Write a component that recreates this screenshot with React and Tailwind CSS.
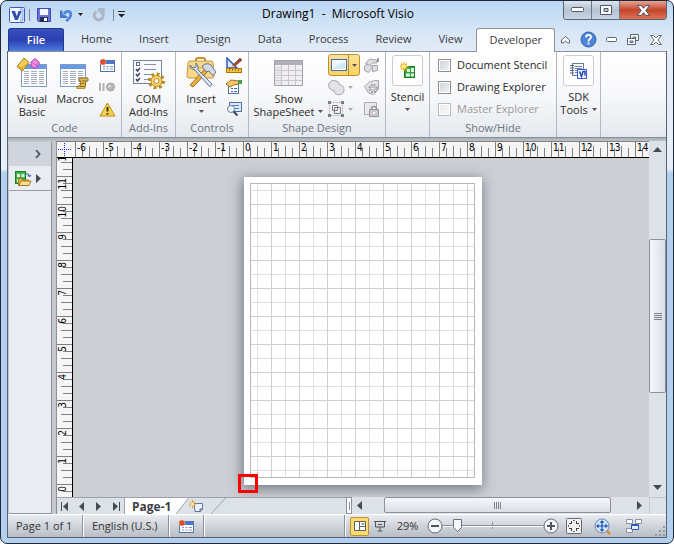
import React, { useState } from 'react'

const TABS = ['Home', 'Insert', 'Design', 'Data', 'Process', 'Review', 'View', 'Developer']
const H_UNITS = [-6, -5, -4, -3, -2, -1, 0, 1, 2, 3, 4, 5, 6, 7, 8, 9, 10, 11, 12, 13, 14]
const V_UNITS = [12, 11, 10, 9, 8, 7, 6, 5, 4, 3, 2, 1, 0]

/* ---------- icons ---------- */

function VisioIcon() {
  return (
    <svg width="16" height="16" viewBox="0 0 16 16">
      <rect x=".5" y=".5" width="15" height="15" rx="1" fill="#f4f8ff" stroke="#3d5dbb" />
      <path d="M11 2h3v12h-3" fill="#c7d7f6" stroke="#7f9be0" strokeWidth=".8" />
      <path d="M2.500 4h3.500l1.800 5.200L9.500 4H12.500l-3.700 9H6z" fill="#2c4cae" />
    </svg>
  )
}

function SaveIcon() {
  return (
    <svg width="14" height="14" viewBox="0 0 14 14">
      <path d="M.5.500h13v13h-12l-1-1z" fill="#6a74d4" stroke="#4149a8" />
      <rect x="3" y="1" width="8" height="6" fill="#f3f6fd" />
      <rect x="3" y="9" width="8" height="5" fill="#272c5c" />
      <rect x="7" y="10" width="3" height="3" fill="#fff" />
    </svg>
  )
}

function UndoIcon() {
  return (
    <svg width="13" height="14" viewBox="0 0 13 14">
      <path d="M4 6C6 2.500 11 2.500 10.800 6.500 10.500 10 8.500 11.500 6 13" fill="none" stroke="#4f86dc" strokeWidth="2.800" />
      <path d="M0 2.500h2.500V6l5 2.500v1.500H0z" fill="#4278d2" />
    </svg>
  )
}

function RedoIcon() {
  return (
    <svg width="13" height="14" viewBox="0 0 13 14">
      <path d="M4.500 3.500a4.500 4.500 0 1 0 5.500.8" fill="none" stroke="#adb6c2" strokeWidth="3" />
      <path d="M6 0h6.500v6.500H9.500L6 3z" fill="#adb6c2" />
    </svg>
  )
}

function Caret({ color = '#555' }) {
  return (
    <svg width="5" height="3" viewBox="0 0 5 3"><path d="M0 0h5L2.500 3z" fill={color} /></svg>
  )
}

function SheetBase({ x = 0, y = 0 }) {
  return (
    <g transform={`translate(${x} ${y})`}>
      <rect x=".5" y=".5" width="25" height="22" fill="#fff" stroke="#7f9cc9" />
      <rect x="1" y="1" width="24" height="4" fill="#6b9ae4" />
      <path d="M3 7.500h5M3 9.500h5M3 11.500h5M3 13.500h5M3 15.500h5M3 17.500h5M3 19.500h5M10 7.500h6M10 9.500h6M10 11.500h6M10 13.500h6M10 15.500h6M10 17.500h6M10 19.500h6M18 7.500h5M18 9.500h5M18 11.500h5M18 13.500h5M18 15.500h5M18 17.500h5M18 19.500h5" stroke="#a3adc0" />
    </g>
  )
}

function VisualBasicIcon() {
  return (
    <svg width="32" height="32" viewBox="0 0 32 32">
      <SheetBase x={5} y={7} />
      <path d="M1 9.500L8 1l5 4.500L6.500 14z" fill="#f2cd57" stroke="#a67a14" />
      <path d="M1 9.500L6 11l7-5.500M6 11l.5 3" fill="none" stroke="#c8961d" strokeWidth=".8" />
      <path d="M15 5l4-3.500 4.500 4L20 12l-5-3z" fill="#f08ae6" stroke="#b642ad" />
      <path d="M15 5l5 3 3-2.500M20 8v4" fill="none" stroke="#c552bc" strokeWidth=".7" />
    </svg>
  )
}

function MacrosIcon() {
  return (
    <svg width="32" height="32" viewBox="0 0 32 32">
      <SheetBase x={1} y={7} />
      <path d="M20 21h9v3h-2l-1 6c0 1.500-1 2-2 2h-5c-1.500 0-1.500-3 0-3h2l1-5h-2z" fill="#e3ba55" stroke="#8f6a18" />
      <path d="M23 24h4M22.500 26.500h3M21 29.500h4" stroke="#8f6a18" />
    </svg>
  )
}

function RecordMacroIcon() {
  return (
    <svg width="16" height="15" viewBox="0 0 16 15">
      <rect x="1.500" y="2.500" width="14" height="11" fill="#fff" stroke="#5472a8" />
      <rect x="2" y="3" width="13" height="3" fill="#4976cf" />
      <path d="M4 8.500h2M4 11h2M7.500 8.500h2M7.500 11h2M11 8.500h3M11 11h3" stroke="#7b93c4" />
      <circle cx="4" cy="4" r="3" fill="#dc4a2b" stroke="#f5b19c" strokeWidth=".6" />
    </svg>
  )
}

function PauseIcon() {
  return (
    <svg width="16" height="10" viewBox="0 0 16 10">
      <path d="M1 1v8M4.500 1v8" stroke="#b4b4b4" strokeWidth="2" />
      <circle cx="11.500" cy="5" r="4" fill="#b7b7b7" stroke="#a2a2a2" />
      <circle cx="10.500" cy="4" r="1.500" fill="#dadada" />
    </svg>
  )
}

function WarningIcon() {
  return (
    <svg width="17" height="15" viewBox="0 0 17 15">
      <path d="M8.500 1L16 14H1z" fill="#fbd34b" stroke="#b98d1d" strokeLinejoin="round" />
      <path d="M8.500 5v4.500M8.500 11v1.500" stroke="#222" strokeWidth="1.800" />
    </svg>
  )
}

function ComIcon() {
  return (
    <svg width="33" height="32" viewBox="0 0 33 32">
      <rect x="1.500" y="3.500" width="28" height="23" fill="#fafbfe" stroke="#76829a" />
      <path d="M12 7.500h12M12 12.500h12M12 17.500h8M12 22.500h5" stroke="#8490a6" />
      <rect x="4.500" y="5.500" width="3" height="3" fill="#fff" stroke="#5a6b8b" />
      <path d="M4 12l1.500 2L8 11M4 17l1.500 2L8 16M4 22l1.500 2L8 21" fill="none" stroke="#3a4660" strokeWidth="1.500" />
      <circle cx="24.500" cy="24" r="7" fill="none" stroke="#b98721" strokeWidth="3" strokeDasharray="2.750 2.750" />
      <circle cx="24.500" cy="24" r="5.500" fill="#f8d568" stroke="#b98721" />
      <circle cx="24.500" cy="24" r="2.500" fill="#fff" stroke="#b98721" />
    </svg>
  )
}

function ToolboxIcon() {
  return (
    <svg width="32" height="32" viewBox="0 0 32 32">
      <path d="M11 5V2.500Q11 1 13 1h5q2 0 2 1.500V5" fill="none" stroke="#c58f2b" strokeWidth="2" />
      <path d="M3 6q0-2 2-2h21q2 0 2 2l1 13q0 2-2 2H4q-2 0-2-2z" fill="#f9d78c" stroke="#c9973b" />
      <path d="M3 11h26" stroke="#dcae55" />
      <path d="M5 28L21 11l3 2L8 30z" fill="#f0ae3e" stroke="#9a6a1c" />
      <path d="M17 9q5-4 9-1l5 7-3 4-4-5-3 1z" fill="#d3d9e4" stroke="#6b7688" />
      <path d="M5 8q0 4 5 5l13 15q3 3 4-1L13 13q1-4-2-7v4l-3 1z" fill="#dbe6f5" stroke="#5c7394" />
    </svg>
  )
}

function DesignModeIcon() {
  return (
    <svg width="17" height="16" viewBox="0 0 17 16">
      <path d="M1 1v10h10z" fill="#dce9ff" stroke="#2f5bc4" strokeWidth="1.500" />
      <path d="M6 9l8-8 2 2-8 7z" fill="#a4473a" stroke="#683026" strokeWidth=".6" />
      <path d="M5 10l2-2 2 2z" fill="#f2c46a" />
      <rect x=".5" y="11.500" width="15" height="4" fill="#f7c440" stroke="#a9770f" />
      <path d="M3.500 12v2M6.500 12v2M9.500 12v2M12.500 12v2" stroke="#a9770f" />
    </svg>
  )
}

function PropertiesIcon() {
  return (
    <svg width="17" height="16" viewBox="0 0 17 16">
      <rect x="2.500" y="5.500" width="10" height="9" fill="#fff" stroke="#54739f" />
      <path d="M5 9.500h2M8 9.500h3M5 12.500h2M8 12.500h3" stroke="#3565ba" />
      <path d="M0 5l5-4 8 1v3L8 6 4 8z" fill="#f3c469" stroke="#a47425" />
      <path d="M12 1h4v4h-4z" fill="#4d9c58" />
    </svg>
  )
}

function ViewCodeIcon() {
  return (
    <svg width="17" height="16" viewBox="0 0 17 16">
      <path d="M3.500 1.500h12v9h-12z" fill="#dce8fb" stroke="#4c6aa4" />
      <path d="M6 4.500h7M8 7.500h5" stroke="#5c80c8" />
      <circle cx="5" cy="8" r="3.500" fill="#eef5fc" stroke="#6d7f98" />
      <path d="M7.500 10.500l4 4" stroke="#38465c" strokeWidth="2" />
    </svg>
  )
}

function ShapeSheetIcon() {
  return (
    <svg width="30" height="27" viewBox="0 0 30 27">
      <rect x=".5" y=".5" width="28" height="25" fill="#f1eef2" stroke="#a5a1a9" />
      <rect x="1" y="1" width="27" height="4" fill="#b3afb6" />
      <path d="M1 10.500h27M1 15.500h27M1 20.500h27" stroke="#c9c5cc" />
      <path d="M7.500 5v20M14.500 5v20M21.500 5v20" stroke="#c9c5cc" />
      <path d="M1 8h6M1 13h6M1 18h6M1 23h6" stroke="#d2ced5" />
    </svg>
  )
}

function ConnectIcon() {
  return (
    <svg width="16" height="12" viewBox="0 0 16 12">
      <rect x=".5" y=".5" width="15" height="11" fill="#fff" stroke="#3c6cb4" />
      <rect x="2" y="2" width="12" height="8" fill="#cfe9f8" />
      <path d="M2 2h12v1L2 9z" fill="#fff" opacity=".6" />
    </svg>
  )
}

function OperationsIcon() {
  return (
    <svg width="17" height="17" viewBox="0 0 17 17">
      <path d="M6.500 1.500a5 5 0 0 1 4.800 4.200A5 5 0 1 1 6 11.400 5 5 0 1 1 6.500 1.500z" fill="#e4e2e6" stroke="#a5a3a8" />
    </svg>
  )
}

function GroupIcon() {
  return (
    <svg width="17" height="17" viewBox="0 0 17 17">
      <path d="M1.500 1.500h13v13h-13z" fill="none" stroke="#b4b4b6" strokeDasharray="2 1" />
      <path d="M4.500 4.500h5v5h-5zM6.500 6.500h6v6h-6z" fill="none" stroke="#7d7d80" />
      <path d="M0 0h3v3H0zM13 0h3v3h-3zM0 13h3v3H0zM13 13h3v3h-3z" fill="#7d7d80" />
    </svg>
  )
}

function ShapeBehaviorIcon({ kind }) {
  return (
    <svg width="17" height="17" viewBox="0 0 17 17">
      {kind === 'hand' && (
        <g stroke="#a3a1a6" fill="#e0dee2" strokeLinejoin="round">
          <path d="M1.500 9.500l4-3 4 4-4 5-4-2z" />
          <path d="M3 5.500l4-3.500 6.500 1v3h-4l-3 2.500-1.500-1.500-2 .5z" />
          <path d="M9 8.500h5.500v5l-5 1z" />
          <path d="M14 1h2v4h-2z" fill="#9a989d" stroke="none" />
        </g>
      )}
      {kind === 'gear' && (
        <g stroke="#a8a6ab" fill="#e4e2e6" strokeLinejoin="round">
          <path d="M1.500 7.500l5-4.500 5-1.500h4v9l-5 5-5-1.500z" />
          <circle cx="10" cy="9.500" r="3.500" strokeDasharray="1.600 1.200" strokeWidth="2" stroke="#98969b" />
          <circle cx="10" cy="9.500" r="1.500" fill="#fff" />
        </g>
      )}
      {kind === 'lock' && (
        <g stroke="#aeacb1" fill="#eae8ec">
          <path d="M1.500 1.500h12v12h-12z" />
          <path d="M8.500 9V7.500q0-2 2.500-2t2.500 2V9" fill="none" strokeWidth="1.500" stroke="#98969b" />
          <path d="M6.500 8.500h9v7h-9z" fill="#cbc9ce" stroke="#98969b" />
          <path d="M11 11v2" stroke="#fff" strokeWidth="2" />
        </g>
      )}
    </svg>
  )
}

function StencilIcon() {
  return (
    <svg width="16" height="17" viewBox="0 0 16 17">
      <rect x="4.500" y="4.500" width="10" height="11" fill="#32a63e" stroke="#177c22" />
      <path d="M7 7h3v3H7zM11 6h3v4h-3zM6 11.500h4v3H6zM11 11.500h3v3h-3z" fill="#dff7df" />
      <path d="M4 0v9M0 4.500h8.500M1 1.500l6 6M7 1.500l-6 6" stroke="#efb21f" strokeWidth="1.300" />
      <circle cx="4" cy="4.500" r="2" fill="#fff07d" />
    </svg>
  )
}

function SdkIcon() {
  return (
    <svg width="17" height="17" viewBox="0 0 17 17">
      <rect x="2.500" y="1.500" width="11" height="12" fill="#f5f8fc" stroke="#697f9c" />
      <path d="M0 3.500h4M0 6h4M0 8.500h4M0 11h4" stroke="#51627b" />
      <path d="M5 4.500h7M5 6.500h7M5 8.500h3M5 10.500h2" stroke="#6c80a4" />
      <rect x="7.500" y="7.500" width="9" height="9" fill="#eef3ff" stroke="#3c5cd2" />
      <path d="M9.500 9.500l2 5 1.500-5h2v4" fill="none" stroke="#2947b5" strokeWidth="1.500" />
    </svg>
  )
}

function HelpIcon() {
  return (
    <svg width="17" height="17" viewBox="0 0 17 17">
      <circle cx="8.500" cy="8.500" r="7.500" fill="#4d84d6" stroke="#3365b4" />
      <path d="M6 6.500Q6 4 8.500 4T11 6.300Q11 7.500 9.500 8.300 8.500 9 8.500 10.500M8.500 11.500v2" fill="none" stroke="#fff" strokeWidth="1.800" />
    </svg>
  )
}

function StencilsFolderIcon() {
  return (
    <svg width="17" height="17" viewBox="0 0 17 17">
      <rect x=".5" y="1.500" width="10" height="12" fill="#43b04c" stroke="#1b8227" />
      <path d="M2 4h3v3H2zM6.500 4h3v3h-3zM2 9h3v3H2z" fill="#def5df" />
      <path d="M11 4q3-1 3.500 2M13 5l1.500 2L16 5" fill="none" stroke="#2e62a8" />
      <path d="M3.500 15.500v-7h3l1 1.500h6v5.500z" fill="#f0bc3f" stroke="#a5761e" />
      <path d="M4 15.500l2-4.500h10l-2 4.500z" fill="#fce28c" stroke="#a5761e" />
    </svg>
  )
}

function NewPageIcon() {
  return (
    <svg width="15" height="13" viewBox="0 0 15 13">
      <path d="M5 3.500h8.500v5.500l-2 2.500H6z" fill="#eef3fd" stroke="#6078a4" />
      <path d="M11 11.500V9h2.500" fill="#b6c8e8" stroke="#47618f" />
      <path d="M3.500 0v8M0 4h7.500M1 1.500l5 5M6 1.500l-5 5" stroke="#e59b1c" />
      <circle cx="3.500" cy="4" r="1.500" fill="#fff7c0" />
    </svg>
  )
}

function Arrow({ dir, bar }) {
  const paths = {
    left: 'M6 0v9L1 4.500z',
    right: 'M1 0v9l5-4.500z',
    up: 'M0 6h9L4.500 1z',
    down: 'M0 1h9L4.500 6z',
  }
  return (
    <svg width="9" height="9" viewBox="0 0 9 9">
      <g transform={bar && dir === 'left' ? 'translate(1 0)' : undefined}>
        <path d={paths[dir]} fill="#454b55" />
      </g>
      {bar && <path d={dir === 'left' ? 'M.5 0v9' : 'M7.500 0v9'} stroke="#454b55" />}
    </svg>
  )
}

/* ---------- title bar and tabs ---------- */

function TitleBar() {
  return (
    <header className="flex h-[27px] shrink-0">
      <div className="flex h-full flex-1 items-center pl-[2px]">
        <VisioIcon />
        <span className="ml-1 h-3 w-px bg-[#7c8896]" />
        <button aria-label="Save" className="ml-[7px]"><SaveIcon /></button>
        <button aria-label="Undo" className="ml-[9px]"><UndoIcon /></button>
        <button aria-label="Undo history" className="ml-[5px]"><Caret color="#222" /></button>
        <button aria-label="Redo" className="ml-[9px]"><RedoIcon /></button>
        <span className="ml-2 h-3 w-px bg-[#7c8896]" />
        <button aria-label="Customize toolbar" className="ml-1">
          <svg width="7" height="7" viewBox="0 0 7 7"><path d="M0 .5h7" stroke="#222" /><path d="M0 3h7L3.500 6.500z" fill="#222" /></svg>
        </button>
      </div>
      <h1 className="pt-[4px] text-[12px] leading-[18px] whitespace-pre text-black">{'Drawing1  -  Microsoft Visio'}</h1>
      <div className="flex flex-1 justify-end">
        <div className="flex h-[19px] overflow-hidden rounded-b-[4px] border border-t-0 border-[#59626d]">
          <button aria-label="Minimize" className="flex w-7 items-center justify-center border-r border-[#6d7885] bg-linear-to-b from-[#dbe6f1] via-[#b4c2d1] via-50% to-[#c8d7e8]">
            <svg width="13" height="6" viewBox="0 0 13 6"><rect x=".5" y=".5" width="12" height="4" rx="1" fill="#fff" stroke="#535666" /></svg>
          </button>
          <button aria-label="Maximize" className="flex w-7 items-center justify-center border-r border-[#6d7885] bg-linear-to-b from-[#dbe6f1] via-[#b4c2d1] via-50% to-[#c8d7e8]">
            <svg width="12" height="10" viewBox="0 0 12 10"><path d="M.5.500h11v9H.5zM4 3.500v3h4v-3z" fillRule="evenodd" fill="#fff" stroke="#535666" /></svg>
          </button>
          <button aria-label="Close" className="flex w-[46px] items-center justify-center bg-linear-to-b from-[#e5a595] via-[#c4432b] via-50% to-[#dd7354]">
            <svg width="13" height="11" viewBox="0 0 13 11"><path d="M.5.500h3.500l2.500 2.800L9 .5h3.500L8.800 5.500l3.700 5H9L6.500 7.700 4 10.500H.5l3.700-5z" fill="#fff" stroke="#535666" /></svg>
          </button>
        </div>
      </div>
    </header>
  )
}

function TabBar({ active, onSelect }) {
  return (
    <nav className="flex h-[23px] shrink-0 items-stretch pl-px text-[11px] text-[#3b3b3b]">
      <button className="w-14 rounded-t-[3px] border border-b-0 border-[#23368c] bg-linear-to-b from-[#3552c0] via-[#2c3fae] to-[#4a7be0] font-semibold text-white">File</button>
      <div className="flex pl-1">
        {TABS.map((tab) => (
          <button
            key={tab}
            onClick={() => onSelect(tab)}
            className={tab === active
              ? 'relative -mb-px rounded-t-[3px] border border-b-0 border-[#8a929c] bg-white px-[12px]'
              : 'pr-[14px] pl-[13px]'}
          >
            {tab}
          </button>
        ))}
      </div>
      <div className="ml-auto flex items-center pr-[5px]">
        <button aria-label="Collapse ribbon" className="mr-[10px]">
          <svg width="9" height="8" viewBox="0 0 9 8"><path d="M.5 4L4.500.500l4 3.500v3H7L4.500 5 2 7H.5z" fill="#fff" stroke="#5d6675" /></svg>
        </button>
        <button aria-label="Help" className="mr-[9px]"><HelpIcon /></button>
        <button aria-label="Minimize drawing" className="mr-[10px]">
          <svg width="11" height="5" viewBox="0 0 11 5"><rect x=".5" y=".5" width="10" height="4" rx="1" fill="#fff" stroke="#5d6675" /></svg>
        </button>
        <button aria-label="Restore drawing" className="mr-[11px]">
          <svg width="12" height="11" viewBox="0 0 12 11"><path d="M3.500.500h8v6h-8zM6 3v1.500h3V3z" fillRule="evenodd" fill="#fff" stroke="#5d6675" /><path d="M.5 4.500h8v6h-8zM3 7v1.500h3V7z" fillRule="evenodd" fill="#fff" stroke="#5d6675" /></svg>
        </button>
        <button aria-label="Close drawing">
          <svg width="12" height="10" viewBox="0 0 12 10"><path d="M.5.500h3L6 3 8.500.500h3L8 5l3.500 4.500h-3L6 7 3.500 9.500h-3L4 5z" fill="#fff" stroke="#5d6675" /></svg>
        </button>
      </div>
    </nav>
  )
}

/* ---------- ribbon ---------- */

function Group({ label, className, children }) {
  return (
    <section className={`flex shrink-0 flex-col border-r border-[#b4b9c0] ${className}`}>
      <div className="flex flex-1 pt-[2px]">{children}</div>
      <h2 className="h-[17px] text-center text-[11px] leading-[16px] text-[#6b7380]">{label}</h2>
    </section>
  )
}

function BigButton({ icon, lines, caret, inlineCaret, className }) {
  return (
    <button className={`flex flex-col items-center text-[11px] leading-[13px] text-[#2b2b2b] ${className}`}>
      <span className="flex h-[38px] items-center">{icon}</span>
      {lines.map((line, i) => (
        <span key={line} className="flex items-center gap-1 whitespace-nowrap">
          {line}
          {inlineCaret && i === lines.length - 1 && <Caret />}
        </span>
      ))}
      {caret && <span className="mt-[5px]"><Caret /></span>}
    </button>
  )
}

function FramedButton({ icon, lines, caret, inlineCaret }) {
  return (
    <button className="flex w-full flex-col items-center text-[11px] leading-[13px] text-[#2b2b2b]">
      <span className="mt-px mb-1 flex h-[31px] w-[31px] items-center justify-center rounded-[3px] border border-[#c9cdd3] bg-white">{icon}</span>
      {lines.map((line, i) => (
        <span key={line} className="flex items-center gap-1 whitespace-nowrap">
          {line}
          {inlineCaret && i === lines.length - 1 && <Caret />}
        </span>
      ))}
      {caret && <span className="mt-[5px]"><Caret /></span>}
    </button>
  )
}

function SmallButton({ label, children }) {
  return <button aria-label={label} className="flex h-[22px] items-center gap-[3px]">{children}</button>
}

function CheckRow({ id, label, disabled }) {
  return (
    <div className="flex h-[22px] items-center gap-[6px]">
      <input
        id={id}
        type="checkbox"
        disabled={disabled}
        className="h-[13px] w-[13px] appearance-none border border-[#8e8f8f] bg-linear-to-br from-[#cbcfd5] to-[#f6f6f6] p-0 outline-1 -outline-offset-2 outline-white checked:bg-[#4b7bd0] disabled:border-[#b8bbc0] disabled:from-[#eeeeee]"
      />
      <label htmlFor={id} className={disabled ? 'text-[#9a9a9a]' : 'text-[#2b2b2b]'}>{label}</label>
    </div>
  )
}

function Ribbon() {
  return (
    <div className="flex h-[87px] shrink-0 overflow-hidden border-y border-t-[#8a929c] border-b-[#868d96] bg-linear-to-b from-white via-[#f7f8fa] to-[#e5e9ee]">
      <Group label="Code" className="w-[114px]">
        <BigButton icon={<VisualBasicIcon />} lines={['Visual', 'Basic']} className="w-[48px]" />
        <BigButton icon={<MacrosIcon />} lines={['Macros']} className="w-[38px]" />
        <div className="ml-[5px] flex flex-col">
          <SmallButton label="Record macro"><RecordMacroIcon /></SmallButton>
          <SmallButton label="Pause recording"><PauseIcon /></SmallButton>
          <SmallButton label="Macro security"><WarningIcon /></SmallButton>
        </div>
      </Group>
      <Group label="Add-Ins" className="w-[54px]">
        <BigButton icon={<ComIcon />} lines={['COM', 'Add-Ins']} className="w-full" />
      </Group>
      <Group label="Controls" className="w-[73px]">
        <BigButton icon={<ToolboxIcon />} lines={['Insert']} caret className="w-[50px]" />
        <div className="flex flex-col">
          <SmallButton label="Design mode"><DesignModeIcon /></SmallButton>
          <SmallButton label="Properties"><PropertiesIcon /></SmallButton>
          <SmallButton label="View code"><ViewCodeIcon /></SmallButton>
        </div>
      </Group>
      <Group label="Shape Design" className="w-[137px]">
        <BigButton icon={<ShapeSheetIcon />} lines={['Show', 'ShapeSheet']} inlineCaret className="w-[79px]" />
        <div className="flex w-[33px] flex-col">
          <button aria-label="Rectangle" className="flex h-[22px] w-[32px] items-stretch rounded-[3px] border border-[#c08f32] bg-linear-to-b from-[#fbe29a] to-[#fcd35c]">
            <span className="flex w-[20px] items-center justify-center border-r border-[#c08f32]"><ConnectIcon /></span>
            <span className="flex flex-1 items-center justify-center"><Caret /></span>
          </button>
          <SmallButton label="Operations"><OperationsIcon /><Caret color="#aaa" /></SmallButton>
          <SmallButton label="Group"><GroupIcon /><Caret color="#aaa" /></SmallButton>
        </div>
        <div className="flex flex-col pl-[2px]">
          <SmallButton label="Behavior"><ShapeBehaviorIcon kind="hand" /></SmallButton>
          <SmallButton label="Shape name"><ShapeBehaviorIcon kind="gear" /></SmallButton>
          <SmallButton label="Protection"><ShapeBehaviorIcon kind="lock" /></SmallButton>
        </div>
      </Group>
      <Group label="" className="w-[44px]">
        <FramedButton icon={<StencilIcon />} lines={['Stencil']} caret />
      </Group>
      <Group label="Show/Hide" className="w-[127px]">
        <div className="pl-2 text-[11px] whitespace-nowrap">
          <CheckRow id="document-stencil" label="Document Stencil" />
          <CheckRow id="drawing-explorer" label="Drawing Explorer" />
          <CheckRow id="master-explorer" label="Master Explorer" disabled />
        </div>
      </Group>
      <Group label="" className="w-[44px]">
        <FramedButton icon={<SdkIcon />} lines={['SDK', 'Tools']} inlineCaret />
      </Group>
    </div>
  )
}

/* ---------- drawing area ---------- */

function ShapesPane() {
  return (
    <aside className="mt-px ml-px w-[43px] shrink-0 border-r border-b border-[#8d939c] bg-[#e9edf3]">
      <div className="flex h-6 items-center justify-end bg-[#d0d5dd] pr-[10px]">
        <button aria-label="Expand shapes window">
          <svg className="block" width="6" height="8" viewBox="0 0 6 8"><path d="M1 0l3.500 4L1 8" fill="none" stroke="#4d5561" strokeWidth="1.800" /></svg>
        </button>
      </div>
      <button aria-label="More shapes" className="flex h-[25px] w-full items-center gap-[3px] border-b border-[#9aa0a9] pl-[6px]">
        <StencilsFolderIcon />
        <Arrow dir="right" />
      </button>
    </aside>
  )
}

function HorizontalRuler() {
  return (
    <div className="flex min-w-0 flex-1 overflow-hidden bg-[#f5f5f5] pl-[2px]">
      {H_UNITS.map((n) => (
        <div key={n} className="flex w-7 shrink-0 border-l border-[#808080] bg-[linear-gradient(#808080,#808080),linear-gradient(#808080,#808080),linear-gradient(#808080,#808080)] bg-[length:1px_9px,1px_11px,1px_9px] bg-[position:6px_100%,13px_100%,20px_100%] bg-no-repeat pt-px pl-px">
          <span className="text-[10px] leading-[10px]">{n}</span>
        </div>
      ))}
    </div>
  )
}

function VerticalRuler() {
  return (
    <div className="w-4 shrink-0 overflow-hidden border-r border-black bg-[#f5f5f5]">
      <div className="-mt-[10px]">
        {V_UNITS.map((n) => (
          <div key={n} className="flex h-7 border-t border-[#808080] bg-[linear-gradient(#808080,#808080),linear-gradient(#808080,#808080),linear-gradient(#808080,#808080)] bg-[length:9px_1px,11px_1px,9px_1px] bg-[position:100%_6px,100%_13px,100%_20px] bg-no-repeat">
            <span className="mt-px h-fit rotate-180 text-[10px] leading-[11px] [writing-mode:vertical-rl]">{n}</span>
          </div>
        ))}
      </div>
    </div>
  )
}

function DrawingPage() {
  return (
    <div className="relative h-[308px] w-[238px] bg-white p-[6px] shadow-[-1px_3px_12px_1px_rgba(80,86,98,0.7)]">
      <svg className="block" width="225" height="295">
        <defs>
          <pattern id="grid" x="-7" y="-7" width="28" height="28" patternUnits="userSpaceOnUse">
            <path d="M14.500 0v28M0 14.500h28" stroke="#e0e0e0" fill="none" />
            <path d="M.5 0v28M0 .5h28" stroke="#cfcfcf" fill="none" />
          </pattern>
        </defs>
        <rect width="225" height="295" fill="url(#grid)" />
        <rect x=".5" y=".5" width="224" height="294" fill="none" stroke="#b8b8b8" />
      </svg>
      <div className="absolute -bottom-[8px] -left-[6px] h-[19px] w-5 border-3 border-[#ff0000]" />
    </div>
  )
}

function VerticalScroll() {
  return (
    <div className="flex w-[17px] shrink-0 flex-col bg-[#dde1e8]">
      <button aria-label="Scroll up" className="flex h-[18px] items-center justify-center"><Arrow dir="up" /></button>
      <div className="flex-[81]" />
      <div className="flex flex-[153] flex-col items-center justify-center gap-px rounded-[2px] border border-[#8b929d] bg-linear-to-r from-[#f5f7fa] to-[#dadfe6]">
        <span className="h-px w-2 bg-[#7b828d]" />
        <span className="h-px w-2 bg-[#7b828d]" />
        <span className="h-px w-2 bg-[#7b828d]" />
        <span className="h-px w-2 bg-[#7b828d]" />
      </div>
      <div className="flex-[87]" />
      <button aria-label="Scroll down" className="flex h-[18px] items-center justify-center"><Arrow dir="down" /></button>
    </div>
  )
}

function PageTabs() {
  return (
    <div className="flex h-[17px] shrink-0 bg-[#dde1e8]">
      <div className="flex min-w-0 flex-[289] items-stretch overflow-hidden border-t border-[#9ba2ac]">
        <button aria-label="First page" className="flex w-[17px] items-center justify-center"><Arrow dir="left" bar /></button>
        <button aria-label="Previous page" className="flex w-[17px] items-center justify-center"><Arrow dir="left" /></button>
        <button aria-label="Next page" className="flex w-[17px] items-center justify-center"><Arrow dir="right" /></button>
        <button aria-label="Last page" className="flex w-[16px] items-center justify-center"><Arrow dir="right" bar /></button>
        <button className="border-l border-[#9ba2ac] bg-white pl-[7px] text-[12px] leading-[15px] font-bold text-[#3b3f46]">Page-1</button>
        <svg className="shrink-0" width="18" height="16" viewBox="0 0 18 16"><path d="M0 0h18L5 16H0z" fill="#fff" /><path d="M17.500 0L5 16" stroke="#9ba2ac" /></svg>
        <button aria-label="Insert page" className="flex items-center"><NewPageIcon /></button>
        <svg className="shrink-0" width="22" height="16" viewBox="0 0 22 16"><path d="M21.500 0L7 16" stroke="#9ba2ac" /></svg>
      </div>
      <div className="flex min-w-0 flex-[303]">
        <div className="flex w-[6px] items-center justify-center border border-[#8b929d] bg-white"><span className="h-2 w-px bg-[#8b929d]" /></div>
        <button aria-label="Scroll left" className="flex w-[16px] items-center justify-center"><Arrow dir="left" /></button>
        <div className="flex-[16]" />
        <div className="mb-px flex flex-[227] items-center justify-center gap-px rounded-[2px] border border-[#8b929d] bg-linear-to-b from-[#f5f7fa] to-[#dadfe6]">
          <span className="h-[7px] w-px bg-[#7b828d]" />
          <span className="h-[7px] w-px bg-[#7b828d]" />
          <span className="h-[7px] w-px bg-[#7b828d]" />
          <span className="h-[7px] w-px bg-[#7b828d]" />
        </div>
        <div className="flex-[21]" />
        <button aria-label="Scroll right" className="flex w-[17px] items-center justify-center"><Arrow dir="right" /></button>
      </div>
      <div className="w-[17px] shrink-0 border-t border-l border-[#c3c8d0]" />
    </div>
  )
}

function Workspace() {
  return (
    <main className="flex min-h-0 flex-1 bg-[#c5c9cf] bg-linear-to-b from-[#a9afb7] to-[#c5c9cf] to-[4px] pt-[3px]">
      <ShapesPane />
      <div className="ml-1 flex min-w-0 flex-1 flex-col border-l border-[#8b9098]">
        <div className="flex min-h-0 flex-1">
          <div className="flex min-w-0 flex-1 flex-col font-['DejaVu_Sans_Condensed','DejaVu_Sans',sans-serif] text-black">
            <div className="flex h-[17px] shrink-0 border-y border-t-[#808080] border-b-black">
              <div className="w-4 bg-[#f5f5f5]">
                <svg className="block" width="15" height="15" viewBox="0 0 15 15"><path d="M1 7.500h13M7.500 1v13" stroke="#1414ff" strokeDasharray="1 1" /></svg>
              </div>
              <HorizontalRuler />
            </div>
            <div className="flex min-h-0 flex-1">
              <VerticalRuler />
              <div className="min-w-0 flex-1 overflow-hidden bg-[#cccfd4] pt-[19px] pl-[171px]">
                <DrawingPage />
              </div>
            </div>
          </div>
          <VerticalScroll />
        </div>
        <PageTabs />
      </div>
    </main>
  )
}

/* ---------- status bar ---------- */

function Divider() {
  return <span className="h-full w-[2px] shrink-0 border-r border-l border-r-white border-l-[#8c929b]" />
}

function ZoomSlider() {
  const [zoom, setZoom] = useState(14)
  return (
    <div className="relative h-[16px] w-[100px]">
      <svg className="block" width="100" height="16" viewBox="0 0 100 16">
        <path d="M0 7.500h100M49.500 4v7" stroke="#868e99" />
        <path d="M0 8.500h100" stroke="#fff" />
        <path d="M0 .5h8v8L4 12.500 0 8.500z" transform={`translate(${zoom - 4 + 0.5} 1)`} fill="#f4f6f8" stroke="#66707e" />
      </svg>
      <input
        aria-label="Zoom"
        type="range"
        min="4"
        max="95"
        value={zoom}
        onChange={(e) => setZoom(Number(e.target.value))}
        className="absolute inset-0 h-full w-full opacity-0"
      />
    </div>
  )
}

function ZoomButton({ label, plus }) {
  return (
    <button aria-label={label}>
      <svg className="block" width="16" height="16" viewBox="0 0 16 16">
        <circle cx="8" cy="8" r="7" fill="#f5f6f8" stroke="#636b77" />
        <path d={plus ? 'M4 8h8M8 4v8' : 'M4 8h8'} stroke="#4f5661" strokeWidth="2" />
      </svg>
    </button>
  )
}

function StatusBar() {
  return (
    <footer className="flex h-[23px] shrink-0 items-center border-t border-white bg-linear-to-b from-[#e9ecf0] via-[#d0d4da] to-[#b9bec6] text-[11px] whitespace-nowrap text-[#333]">
      <span className="w-[74px] pl-[8px]">Page 1 of 1</span>
      <Divider />
      <span className="w-[84px] pl-[8px]">English (U.S.)</span>
      <Divider />
      <button aria-label="Record macro" className="flex w-[33px] justify-center pr-[2px]"><RecordMacroIcon /></button>
      <Divider />
      <div className="ml-auto flex h-full items-center">
        <Divider />
        <button aria-label="Normal view" className="ml-[4px] flex h-[19px] w-[19px] items-center justify-center rounded-[2px] border border-[#c08f32] bg-[#fddc6e]">
          <svg width="12" height="10" viewBox="0 0 12 10"><path d="M.5.500h11v9H.5zM5.500.500v9M6 5.500h5" fill="#fff" stroke="#5d5f66" /><path d="M7.500 2h3v2h-3z" fill="#9aa0aa" /></svg>
        </button>
        <button aria-label="Full screen" className="ml-[5px]">
          <svg width="12" height="11" viewBox="0 0 12 11"><path d="M0 .5h12M1.500 1v5h9V1M6 6v4M3.500 10h5M4 3.500h4" fill="none" stroke="#4d5460" /></svg>
        </button>
        <button className="w-[41px] pl-[2px] text-center">29%</button>
        <ZoomButton label="Zoom out" />
        <ZoomSlider />
        <ZoomButton label="Zoom in" plus />
        <button aria-label="Fit to window" className="ml-[7px]">
          <svg width="17" height="17" viewBox="0 0 17 17">
            <rect x=".5" y=".5" width="15" height="15" rx="1" fill="#f2f2f2" stroke="#66696f" />
            <path d="M3 5.500h3M5.500 3v3M10.500 3v3M10 5.500h3M3 10.500h3M5.500 10v3M10.500 10v3M10 10.500h3" stroke="#444" />
            <path d="M2 8h1M13 8h1M8 2v1M8 13v1" stroke="#444" strokeWidth="1.500" />
          </svg>
        </button>
        <button aria-label="Pan and zoom" className="ml-[11px]">
          <svg width="17" height="17" viewBox="0 0 17 17">
            <circle cx="8" cy="8" r="7" fill="#cfe3fb" stroke="#6c88b2" />
            <path d="M8 3v10M3 8h10M6.500 4.500L8 3l1.500 1.500M6.500 11.500L8 13l1.500-1.500M4.500 6.500L3 8l1.500 1.500M11.500 6.500L13 8l-1.500 1.500" fill="none" stroke="#1f4fae" strokeWidth="1.200" />
            <path d="M13 13l3 3" stroke="#dc8a2e" strokeWidth="2.500" />
          </svg>
        </button>
        <button aria-label="Switch windows" className="ml-[15px]">
          <svg width="17" height="15" viewBox="0 0 17 15">
            <path d="M.5.500h6v4h-6zM9.500.500h6v4h-6zM.5 9.500h6v4h-6z" fill="#fff" stroke="#8d939c" />
            <path d="M5.500 5.500h7v5h-7z" fill="#eaf1ff" stroke="#2f5bbd" /><path d="M6 6.500h6" stroke="#2f5bbd" />
          </svg>
        </button>
        <svg className="mt-auto ml-[12px] block" width="11" height="12" viewBox="0 0 11 12"><path d="M8 1h2v2H8zM4 5h2v2H4zM8 5h2v2H8zM0 9h2v2H0zM4 9h2v2H4zM8 9h2v2H8z" fill="#939aa4" /></svg>
      </div>
    </footer>
  )
}

export default function App() {
  const [tab, setTab] = useState('Developer')

  return (
    <div className="flex h-screen min-h-[544px] flex-col overflow-hidden rounded-[7px] border border-[#1e2732] bg-[linear-gradient(#b9d6f3,#d5e5f6_28px,#e3ecf7_51px,#e6eff9_168px,#b3d0ee_172px)] px-[6px] pb-[5px] font-['Open_Sans','Noto_Sans',sans-serif]">
      <TitleBar />
      <TabBar active={tab} onSelect={setTab} />
      <div className="flex min-h-0 flex-1 flex-col border-x border-b border-[#566372]">
        <Ribbon />
        <Workspace />
        <StatusBar />
      </div>
    </div>
  )
}
